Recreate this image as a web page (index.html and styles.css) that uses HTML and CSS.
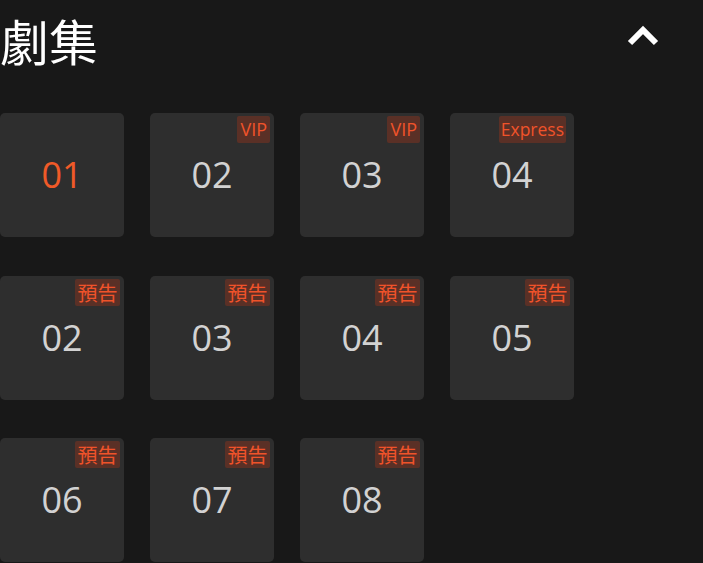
FILE: index.html
```html
<!DOCTYPE html>
<html lang="zh-Hant">
<head>
<meta charset="utf-8">
<link rel="stylesheet" href="styles.css">
</head>
<body>
<div class="panel">
  <div class="header">
    <h1 class="title">劇集</h1>
    <button class="toggle" aria-label="收起">
      <svg width="36" height="24" viewBox="0 0 36 24"><polyline points="5,19 18,6 31,19" fill="none" stroke="#fff" stroke-width="6" stroke-linecap="butt" stroke-linejoin="miter"/></svg>
    </button>
  </div>
  <div class="grid">
    <div class="ep active"><span class="num">01</span></div>
    <div class="ep"><span class="badge">VIP</span><span class="num">02</span></div>
    <div class="ep"><span class="badge">VIP</span><span class="num">03</span></div>
    <div class="ep"><span class="badge wide">Express</span><span class="num">04</span></div>
    <div class="ep"><span class="badge cjk">預告</span><span class="num">02</span></div>
    <div class="ep"><span class="badge cjk">預告</span><span class="num">03</span></div>
    <div class="ep"><span class="badge cjk">預告</span><span class="num">04</span></div>
    <div class="ep"><span class="badge cjk">預告</span><span class="num">05</span></div>
    <div class="ep"><span class="badge cjk">預告</span><span class="num">06</span></div>
    <div class="ep"><span class="badge cjk">預告</span><span class="num">07</span></div>
    <div class="ep"><span class="badge cjk">預告</span><span class="num">08</span></div>
  </div>
</div>
</body>
</html>
```

FILE: styles.css
```css
html, body {
  margin: 0;
  padding: 0;
  background: #181818;
  height: 100%;
  overflow: hidden;
}
.panel {
  font-family: "Open Sans", "Noto Sans CJK TC", sans-serif;
  color: #fff;
}
.header {
  display: flex;
  align-items: center;
  justify-content: space-between;
  height: 80px;
  padding-right: 42px;
}
.title {
  margin: 0;
  font-family: "Noto Sans CJK TC", sans-serif;
  font-weight: 400;
  font-size: 49px;
  line-height: 80px;
  color: #fff;
}
.toggle {
  background: none;
  border: 0;
  padding: 0;
  margin-top: -8px;
  display: flex;
}
.grid {
  margin-top: 33px;
  display: grid;
  grid-template-columns: repeat(4, 124px);
  grid-auto-rows: 124px;
  column-gap: 26px;
  row-gap: 38.5px;
}
.ep {
  position: relative;
  background: #2e2e2e;
  border-radius: 5px;
  display: flex;
  align-items: center;
  justify-content: center;
}
.num {
  font-size: 36px;
  color: #d2d2d2;
  line-height: 1;
}
.ep.active .num {
  color: #f05a28;
}
.badge {
  position: absolute;
  top: 3px;
  right: 4px;
  background: #5a3026;
  color: #f0532a;
  font-size: 18px;
  line-height: 27px;
  padding: 0 3px;
  border-radius: 2px;
}
.badge.wide {
  right: 8px;
  font-size: 17.5px;
  padding: 0 2px;
}
.badge.cjk {
  font-family: "Noto Sans CJK TC", sans-serif;
  font-size: 20px;
  padding: 0 2.5px;
}
```
